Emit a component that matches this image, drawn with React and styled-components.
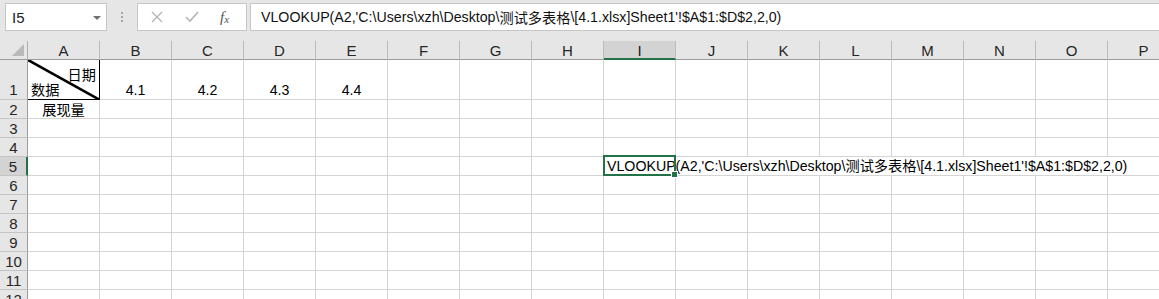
import React from "react";
import styled, { createGlobalStyle, css } from "styled-components";

const FORMULA =
  "VLOOKUP(A2,'C:\\Users\\xzh\\Desktop\\测试多表格\\[4.1.xlsx]Sheet1'!$A$1:$D$2,2,0)";

const columns = ["A", "B", "C", "D", "E", "F", "G", "H", "I", "J", "K", "L", "M", "N", "O", "P"];
const rows = [1, 2, 3, 4, 5, 6, 7, 8, 9, 10, 11, 12];

const GlobalStyle = createGlobalStyle`
  html, body {
    margin: 0;
    padding: 0;
    background: #ffffff;
    overflow: hidden;
  }
  body {
    font-family: "Liberation Sans", "Noto Sans CJK SC", sans-serif;
  }
`;

// split text so Chinese runs get the CJK family explicitly
const Mixed = ({ text }) =>
  text.split(/([\u4e00-\u9fff]+)/).map((part, i) =>
    /[\u4e00-\u9fff]/.test(part) ? <Cjk key={i}>{part}</Cjk> : <React.Fragment key={i}>{part}</React.Fragment>
  );

const App = () => {
  const cellText = (row, col) => {
    if (row === 1 && col === "B") return "4.1";
    if (row === 1 && col === "C") return "4.2";
    if (row === 1 && col === "D") return "4.3";
    if (row === 1 && col === "E") return "4.4";
    if (row === 2 && col === "A") return <Cjk>展现量</Cjk>;
    return "";
  };

  return (
    <>
      <GlobalStyle />
      <Window>
        <FormulaBar>
          <NameBox>
            <span>I5</span>
            <DropArrow />
          </NameBox>
          <Grip>
            <i />
            <i />
            <i />
          </Grip>
          <FxBox>
            <svg width="12" height="12" viewBox="0 0 12 12">
              <path d="M1 1 L11 11 M11 1 L1 11" stroke="#b4b4b4" strokeWidth="1.3" fill="none" />
            </svg>
            <svg width="14" height="12" viewBox="0 0 14 12">
              <path d="M1 6 L5 10 L13 1" stroke="#b4b4b4" strokeWidth="1.6" fill="none" />
            </svg>
            <Fx>
              f<sub>x</sub>
            </Fx>
          </FxBox>
          <FormulaInput>
            <Mixed text={FORMULA} />
          </FormulaInput>
        </FormulaBar>

        <Sheet>
          <Corner>
            <svg width="12" height="12" viewBox="0 0 12 12">
              <polygon points="12,0 12,12 0,12" fill="#b9b9b9" />
            </svg>
          </Corner>
          {columns.map((c) => (
            <ColHeader key={c} $active={c === "I"}>
              {c}
            </ColHeader>
          ))}

          {rows.map((r) => (
            <React.Fragment key={r}>
              <RowHeader $active={r === 5} $tall={r === 1}>
                {r}
              </RowHeader>
              {columns.map((c) => {
                if (r === 1 && c === "A") {
                  return (
                    <DiagonalCell key={c}>
                      <svg width="72" height="40" viewBox="0 0 72 40">
                        <line x1="0" y1="0" x2="72" y2="40" stroke="#000" strokeWidth="2.6" />
                      </svg>
                      <TopRight>日期</TopRight>
                      <BottomLeft>数据</BottomLeft>
                    </DiagonalCell>
                  );
                }
                if (r === 5 && c === "I") {
                  return (
                    <Cell key={c} $overflow>
                      <SelectedFrame />
                      <OverflowText>
                        <Mixed text={FORMULA} />
                      </OverflowText>
                    </Cell>
                  );
                }
                return (
                  <Cell key={c} $noRight={r === 5 && c > "I"}>
                    {cellText(r, c)}
                  </Cell>
                );
              })}
            </React.Fragment>
          ))}
        </Sheet>
      </Window>
    </>
  );
};

const Window = styled.div`
  width: 1159px;
  height: 299px;
  display: flex;
  flex-direction: column;
  overflow: hidden;
  background: #ffffff;
`;

const Cjk = styled.span`
  font-family: "Noto Sans CJK SC", sans-serif;
  color: inherit;
`;

const FormulaBar = styled.div`
  height: 41px;
  box-sizing: border-box;
  display: flex;
  align-items: flex-start;
  padding: 3px 0 0 5px;
  background: #e6e6e6;
  flex-shrink: 0;
`;

const boxBase = css`
  height: 28px;
  box-sizing: border-box;
  background: #ffffff;
  border: 1px solid #c6c6c6;
`;

const NameBox = styled.div`
  ${boxBase};
  width: 102px;
  display: flex;
  align-items: center;
  justify-content: space-between;
  padding: 0 5px 0 6px;
  font-size: 15px;
  color: #222;
`;

const DropArrow = styled.span`
  width: 0;
  height: 0;
  border-left: 4px solid transparent;
  border-right: 4px solid transparent;
  border-top: 4px solid #6f6f6f;
  margin-top: 1px;
`;

const Grip = styled.div`
  width: 30px;
  height: 28px;
  display: flex;
  flex-direction: column;
  align-items: center;
  justify-content: center;
  gap: 2px;

  i {
    display: block;
    width: 2px;
    height: 2px;
    background: #a6a6a6;
  }
`;

const FxBox = styled.div`
  ${boxBase};
  width: 110px;
  display: flex;
  align-items: center;
  padding: 0 0 0 13px;
  gap: 22px;
`;

const Fx = styled.span`
  font-family: "Liberation Serif", serif;
  font-style: italic;
  font-size: 15px;
  color: #555;
  margin-left: -1px;

  sub {
    font-size: 11px;
    vertical-align: baseline;
    position: relative;
    top: 1px;
  }
`;

const FormulaInput = styled.div`
  ${boxBase};
  flex: 1;
  margin-left: 3px;
  border-right: none;
  display: flex;
  align-items: center;
  padding-left: 10px;
  font-size: 14.2px;
  color: #111;
  white-space: nowrap;
`;

const Sheet = styled.div`
  display: grid;
  grid-template-columns: 28px repeat(16, 72px);
  grid-template-rows: 19px 40px repeat(11, 19px);
  background: #ffffff;
  font-size: 14.2px;
`;

const Corner = styled.div`
  background: #e6e6e6;
  box-sizing: border-box;
  border-right: 1px solid #ababab;
  border-bottom: 1px solid #9b9b9b;
  display: flex;
  align-items: flex-end;
  justify-content: flex-end;
  padding: 0 3px 3px 0;
`;

const ColHeader = styled.div`
  box-sizing: border-box;
  background: ${(p) => (p.$active ? "#d3d3d3" : "#e6e6e6")};
  border-right: 1px solid #bcbcbc;
  border-bottom: ${(p) => (p.$active ? "2px solid #217346" : "1px solid #9b9b9b")};
  display: flex;
  align-items: center;
  justify-content: center;
  font-size: 15px;
  color: ${(p) => (p.$active ? "#1a1a1a" : "#262626")};
  padding-top: 1px;
`;

const RowHeader = styled.div`
  box-sizing: border-box;
  background: ${(p) => (p.$active ? "#d3d3d3" : "#e6e6e6")};
  border-bottom: 1px solid #c4c4c4;
  border-right: ${(p) => (p.$active ? "2px solid #217346" : "1px solid #9b9b9b")};
  display: flex;
  align-items: ${(p) => (p.$tall ? "flex-end" : "center")};
  justify-content: center;
  font-size: 15px;
  color: #262626;
  padding-bottom: ${(p) => (p.$tall ? "1px" : "0")};
`;

const Cell = styled.div`
  position: relative;
  box-sizing: border-box;
  border-right: ${(p) => (p.$noRight ? "none" : "1px solid #d4d4d4")};
  border-bottom: 1px solid #d4d4d4;
  display: flex;
  align-items: flex-end;
  justify-content: ${(p) => (p.$overflow ? "flex-start" : "center")};
  padding-bottom: 1px;
  line-height: 16px;
  color: #000;
  white-space: nowrap;
  overflow: ${(p) => (p.$overflow ? "visible" : "hidden")};
  z-index: ${(p) => (p.$overflow ? 2 : 0)};
`;

const OverflowText = styled.span`
  margin-left: 3px;
  width: 0;
  flex: 0 0 auto;
  white-space: nowrap;
  overflow: visible;
`;

const SelectedFrame = styled.span`
  position: absolute;
  left: -1px;
  top: -2px;
  width: 73px;
  height: 21px;
  box-sizing: border-box;
  border: 2px solid #217346;
  pointer-events: none;

  &::after {
    content: "";
    position: absolute;
    right: -4px;
    bottom: -4px;
    width: 5px;
    height: 5px;
    background: #217346;
    border: 1px solid #ffffff;
  }
`;

const DiagonalCell = styled.div`
  position: relative;
  box-sizing: border-box;
  border-right: 1px solid #000;
  border-bottom: 1px solid #000;
  overflow: hidden;
  font-family: "Noto Sans CJK SC", sans-serif;

  svg {
    position: absolute;
    left: 0;
    top: 0;
  }
`;

const TopRight = styled.span`
  position: absolute;
  right: 3px;
  top: 4px;
`;

const BottomLeft = styled.span`
  position: absolute;
  left: 3px;
  bottom: 0px;
`;

export default App;
